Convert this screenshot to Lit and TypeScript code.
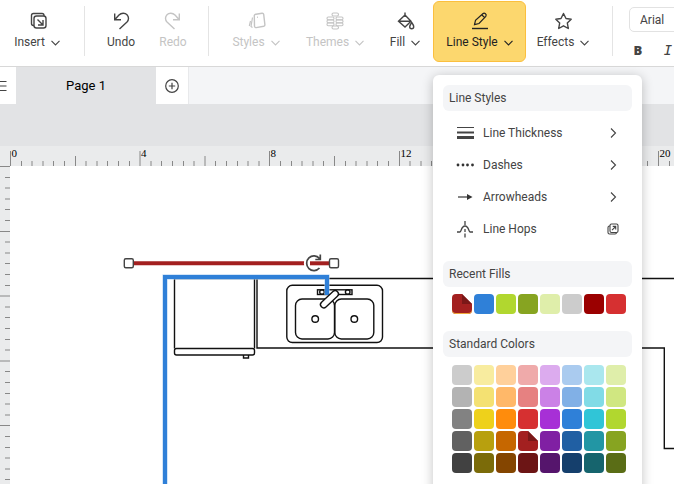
import { LitElement, html, svg, css } from "lit";
import { customElement, property } from "lit/decorators.js";
import { classMap } from "lit/directives/class-map.js";

const TOOL_ICONS: Record<string, unknown> = {
  insert: svg`<rect x="9" y="5" width="12" height="12" rx="2.500"/><path d="M9 14.500H8.500a2 2 0 0 1-2-2V4.500a2 2 0 0 1 2-2H17a2 2 0 0 1 2 2V5"/><path d="M12.500 8.500l5 5M18 9v5h-5"/>`,
  undo: svg`<path d="M5.700 2.500v6.200h6.300M5.700 8.700l4.300-4.700c2.400-2.300 6-2.300 8-.3s2 5.300 0 7.300l-7.500 7"/>`,
  redo: svg`<path d="M18.300 2.500v6.200H12M18.300 8.700L14 4c-2.400-2.300-6-2.300-8-.3s-2 5.300 0 7.300l7.500 7"/>`,
  styles: svg`<path d="M12 3.300l6-1.100a1.500 1.500 0 0 1 1.700 1.200l1.200 10.300a1.500 1.500 0 0 1-1.200 1.600l-7.500 1.300a1.500 1.500 0 0 1-1.700-1.200L10.300 5a1.500 1.500 0 0 1 1.700-1.700zM13 6.300h.8"/><path d="M8.500 6.500L7 15.500l1.500 1M6.500 10L5.300 15" stroke-width="1.200"/>`,
  themes: svg`<g stroke-width="1.100"><rect x="9" y="2" width="6.500" height="3" rx="1.500"/><rect x="4" y="6" width="7" height="2.800" rx="1.200"/><rect x="13" y="6" width="7" height="2.800" rx="1.200"/><rect x="4" y="9" width="7" height="2.800" rx="1.200"/><rect x="13" y="9" width="7" height="2.800" rx="1.200"/><rect x="4" y="12" width="7" height="2.800" rx="1.200"/><rect x="13" y="12" width="7" height="2.800" rx="1.200"/><rect x="9" y="15" width="6.500" height="3" rx="1.500"/></g>`,
  fill: svg`<path d="M12 4l6 6.200L12 16 5.500 10.200zM12 1.500V6M5.500 10.200H18"/><path d="M18.700 11.500c1.500 2 2 3 2 4.200a2 2 0 0 1-4 0c0-1.200.7-2.300 2-4.200z"/>`,
  line: svg`<path d="M4 17.500h16"/><path d="M6.500 13.700l1-4.300 7.300-6.600a2 2 0 0 1 3 2.600L11 12.500zM14 4l2.500 2.500" stroke-width="1.200"/>`,
  effects: svg`<path d="M12.500 2.500l2.500 5 5.200.7-3.900 3.700 1 5.600-4.800-2.700-4.800 2.700 1-5.600-3.900-3.700 5.200-.7z" stroke-linejoin="round"/>`,
};

const MENU_ICONS: Record<string, unknown> = {
  thickness: svg`<path d="M2 4.500h17" stroke-width="1"/><path d="M2 9.500h17" stroke-width="2"/><path d="M2 14.500h17" stroke-width="3"/>`,
  dashes: svg`<g class="solid"><circle cx="3" cy="10" r="1.400"/><circle cx="8" cy="10" r="1.400"/><circle cx="12.500" cy="10" r="1.400"/><circle cx="17.500" cy="10" r="1.400"/></g>`,
  arrowheads: svg`<path d="M3 10h11"/><path class="solid" d="M12 7l5.500 3-5.500 3z"/>`,
  hops: svg`<path d="M2 13h3c1.500 0 1-6 5-6s3.500 6 5 6h3M10 2v4M10 10v3M10 14.500v4"/>`,
};

@customElement("tool-button")
class ToolButton extends LitElement {
  @property() icon = "";
  @property() label = "";
  @property({ type: Boolean }) menu = false;
  @property({ type: Boolean }) off = false;
  @property({ type: Boolean }) active = false;

  static styles = css`
    :host { display: block; }
    button {
      width: 100%; height: 61px; margin: 0; padding: 9px 0 0;
      border: 1px solid transparent; border-radius: 6px; background: none;
      display: flex; flex-direction: column; align-items: center; gap: 3px;
      font: 12px/16px Roboto, sans-serif; color: #444; white-space: nowrap;
    }
    button.active { background: #fcd76e; border-color: #fbbf3e; color: #222; }
    button:disabled { color: #c4c4c4; }
    svg { fill: none; stroke: currentColor; stroke-width: 1.4; }
    .label { display: flex; align-items: center; gap: 6px; }
    .caret { stroke-width: 1.1; margin-top: 1px; }
  `;

  render() {
    return html`<button class=${classMap({ active: this.active })} ?disabled=${this.off}>
      <svg width="24" height="20" viewBox="0 0 24 20">${TOOL_ICONS[this.icon]}</svg>
      <span class="label">${this.label}
        ${this.menu ? html`<svg class="caret" width="9" height="6" viewBox="0 0 9 6"><path d="M.5.8l4 4.200L8.500.8"/></svg>` : ""}
      </span>
    </button>`;
  }
}

@customElement("color-swatches")
class ColorSwatches extends LitElement {
  @property({ attribute: false }) colors: string[] = [];
  @property({ type: Boolean }) outlined = false;
  @property() selected = "";

  static styles = css`
    :host { display: grid; grid-template-columns: repeat(8, 20px); gap: 2px; }
    button { height: 20px; padding: 0; border: 0; border-radius: 4px; overflow: hidden; }
    .selected { clip-path: polygon(0 0, 50% 0, 100% 50%, 100% 100%, 0 100%); position: relative; }
    .selected::after {
      content: ""; position: absolute; top: 0; right: 0; width: 10px; height: 10px;
      background: #7a1818;
    }
    .outlined { box-shadow: inset 0 -1px #f0a83a; }
  `;

  render() {
    return this.colors.map((c) => {
      const selected = c === this.selected;
      return html`<button aria-label=${c} style="background:${c}"
        class=${classMap({ selected, outlined: selected && this.outlined })}></button>`;
    });
  }
}

const RECENT = ["#a32020", "#2f80d8", "#b1d72f", "#87a421", "#dfeeaa", "#cccccc", "#9b0000", "#d63031"];
const STANDARD = [
  "#cccccc", "#f8ec9f", "#ffd09b", "#efaaaa", "#dcabee", "#aacbef", "#aae7ee", "#dfeeaa",
  "#b3b3b3", "#f4e172", "#ffb869", "#e68181", "#cb81e6", "#81b0e6", "#81dbe6", "#d0e781",
  "#828282", "#eed11b", "#ff8c0c", "#d63031", "#a730d6", "#2f80d8", "#30c5d7", "#b1d72f",
  "#616161", "#b8a00e", "#c66700", "#a32020", "#8020a3", "#205fa3", "#2296a4", "#87a421",
  "#414141", "#7b6b09", "#844500", "#6c1515", "#55156c", "#153f6c", "#16646d", "#5a6d16",
];

@customElement("line-style-panel")
class LineStylePanel extends LitElement {
  static styles = css`
    :host {
      display: block; box-sizing: border-box; width: 209px; padding: 10px 10px 24px;
      background: #fff; border-radius: 6px; box-shadow: 0 2px 12px rgba(0, 0, 0, 0.24);
      font: 12px/16px Roboto, sans-serif; color: #444;
    }
    h2 {
      margin: 0; padding: 5px 6px; border-radius: 6px; background: #f4f5f7;
      font-size: 12px; font-weight: 400;
    }
    .rows { padding: 6px 12px 16px; }
    .row {
      width: 100%; height: 32px; padding: 0; border: 0; background: none;
      display: flex; align-items: center; gap: 8px; font: inherit; color: inherit; text-align: left;
    }
    .name { flex: 1; }
    svg { fill: none; stroke: #444; stroke-width: 1.3; }
    .solid { fill: #333; stroke: none; }
    .end { stroke-width: 1.1; }
    .recent { padding: 7px 9px 17px; }
    .standard { padding: 8px 9px; }
  `;

  row(icon: string, name: string, opens = false) {
    return html`<button class="row">
      <svg width="20" height="20" viewBox="0 0 20 20">${MENU_ICONS[icon]}</svg>
      <span class="name">${name}</span>
      <svg class="end" width="14" height="14" viewBox="0 0 14 14">${opens
        ? svg`<rect x="4" y="2" width="8" height="8.500" rx="1.500"/><path d="M4 4H3.500A1.500 1.500 0 0 0 2 5.500v5A1.500 1.500 0 0 0 3.500 12H9a1.500 1.500 0 0 0 1.500-1.500M6 8.200l3.700-3.700M6.700 4.400h3v3"/>`
        : svg`<path d="M5 2.500L9.500 7 5 11.500"/>`}</svg>
    </button>`;
  }

  render() {
    return html`
      <h2>Line Styles</h2>
      <div class="rows">
        ${this.row("thickness", "Line Thickness")}
        ${this.row("dashes", "Dashes")}
        ${this.row("arrowheads", "Arrowheads")}
        ${this.row("hops", "Line Hops", true)}
      </div>
      <h2>Recent Fills</h2>
      <div class="recent"><color-swatches outlined .colors=${RECENT} selected="#a32020"></color-swatches></div>
      <h2>Standard Colors</h2>
      <div class="standard"><color-swatches .colors=${STANDARD} selected="#a32020"></color-swatches></div>
    `;
  }
}

const TICK = 10.8;
const LABEL_ROOM = 24;
const ticksWithin = (length: number) =>
  Array.from({ length: Math.ceil(length / TICK) }, (_, i) => i);

@customElement("app-root")
class AppRoot extends LitElement {
  static styles = css`
    :host {
      display: flex; flex-direction: column; height: 100vh; overflow: hidden;
      background: #e2e3e5; font: 12px/16px Roboto, sans-serif; color: #444;
    }
    .toolbar {
      display: flex; flex: none; padding-bottom: 4px;
      background: #fff; border-bottom: 1px solid #d8d8d8;
    }
    .group { display: flex; flex: none; padding-top: 1px; position: relative; }
    .group::after {
      content: ""; position: absolute; right: 0; top: 6px; bottom: 6px; width: 1px; background: #e4e4e4;
    }
    .insert { padding-right: 11px; }
    .history { padding-left: 10px; padding-right: 10px; }
    .format { padding-left: 10px; padding-right: 13px; }
    .w52 { width: 52px; }
    .w56 { width: 56px; }
    .w74 { width: 74px; }
    .w84 { width: 84px; }
    .w93 { width: 93px; }
    .anchor { position: relative; }
    line-style-panel { position: absolute; z-index: 2; top: 74px; left: 0; }
    .font { flex: none; display: flex; flex-direction: column; gap: 8px; padding: 7px 16px 0; }
    select {
      appearance: none; box-sizing: border-box; width: 130px; height: 25px; padding: 0 10px;
      border: 1px solid #e2e2e2; border-radius: 5px; background: #fff;
      font: 12px/16px Roboto, sans-serif; color: #444;
    }
    .marks { display: flex; gap: 12px; }
    .marks button {
      width: 18px; height: 20px; padding: 0; border: 0; background: none;
      font: 900 13px/20px "Noto Sans", sans-serif; color: #444;
    }
    .marks .italic { font: italic 14px/20px "DejaVu Sans Mono", monospace; }
    .tabs { display: flex; flex: none; height: 37px; background: #f4f5f7; }
    .tabs button { padding: 0; border: 0; background: #fff; display: flex; align-items: center; justify-content: center; }
    .tabs svg { fill: none; stroke: #444; stroke-width: 1.2; }
    .tabs .pages { width: 16px; justify-content: flex-start; }
    .tabs .page { width: 140px; background: #e2e3e5; font: 13px/18px Roboto, sans-serif; color: #000; }
    .tabs .add { width: 33px; border-right: 1px solid #e8e9eb; }
    .workspace {
      flex: 1; min-height: 0; margin-top: 42px; display: grid;
      grid-template-columns: 10px minmax(0, 1fr); grid-template-rows: 20px minmax(0, 1fr);
      background: #eaebec;
    }
    .workspace svg { display: block; width: 100%; height: 100%; }
    .ruler { stroke: #888; stroke-width: 1; }
    .ruler text { stroke: none; fill: #000; font: 11px "Liberation Serif", serif; }
    .canvas { background: #fff; fill: none; stroke: #111; stroke-width: 1.4; }
    .canvas .wire { stroke: #2f80d8; stroke-width: 4; }
    .canvas .wire-edge { stroke: #a9cdf2; stroke-width: 5; }
    .canvas .beam { stroke: #a32020; stroke-width: 4; }
    .canvas .handle { fill: #fff; stroke: #444; }
    .canvas .paper { fill: #fff; }
    .canvas .halo { stroke: #fff; stroke-width: 5; }
    .canvas .rotate { stroke: #444; stroke-width: 1.7; }
  `;

  private onResize = () => this.requestUpdate();

  connectedCallback() {
    super.connectedCallback();
    window.addEventListener("resize", this.onResize);
  }

  disconnectedCallback() {
    window.removeEventListener("resize", this.onResize);
    super.disconnectedCallback();
  }

  topRuler() {
    const width = window.innerWidth - 10;
    return ticksWithin(width).map((i) => {
      const x = Math.round(i * TICK * 2) / 2 + 0.5;
      const len = i % 12 === 0 ? 15 : i % 6 === 0 ? 10 : 5;
      const labelled = i % 12 === 0 && x + (i < 30 ? 6 : 12) < width;
      return svg`<path d="M${x} ${20 - len}v${len}"/>
        ${labelled ? svg`<text x=${x + 1} y="11">${i / 3}</text>` : ""}`;
    });
  }

  leftRuler() {
    return ticksWithin(window.innerHeight - LABEL_ROOM).map((i) => {
      const y = Math.round(i * TICK * 2) / 2 + 0.5;
      return svg`<path d="M${i % 6 === 0 ? 0 : 5} ${y}H10"/>`;
    });
  }

  drawing() {
    return svg`<g transform="translate(-10 -166)">
      <path d="M174 278.500H2000M257 278.500V348H664.300V448.500H2000"/>
      <path d="M174.500 278.500v70M254.500 278.500v70"/>
      <rect class="paper" x="174.500" y="348.500" width="80" height="6.500" rx="2"/>
      <path d="M243.500 355v3h5v-3"/>
      <rect x="286.800" y="285.300" width="95.700" height="57.200" rx="5.500"/>
      <rect x="295.500" y="299" width="39" height="40" rx="6.500"/>
      <rect x="334.800" y="299" width="39" height="40" rx="6.500"/>
      <circle cx="315.200" cy="319" r="3.300"/><circle cx="354.300" cy="319" r="3.300"/>
      <rect x="317.500" y="289.800" width="34.500" height="4.700"/>
      <circle cx="322" cy="292" r="2.300"/><circle cx="347.700" cy="292" r="2.300"/>
      <path class="wire-edge" d="M165 2000V277H327V295"/>
      <path class="wire" d="M165 2000V277H327V295"/>
      <rect class="paper" x="318.500" y="296" width="22" height="6.500" rx="3.200" transform="rotate(-43 329.500 299.300)"/>
      <path class="beam" d="M133 263.300H304.500"/>
      <path class="halo" d="M318.500 258a7.200 7.200 0 1 0 .5 10"/>
      <path class="beam" d="M310 263.300H330"/>
      <path class="rotate" d="M319.500 258.500a7.300 7.300 0 1 0 0 9.500M320.300 254.500v5h-5"/>
      <rect class="handle" x="124.300" y="258.800" width="9" height="9" rx="1.500"/>
      <rect class="handle" x="329.500" y="258.800" width="9" height="9" rx="1.500"/>
    </g>`;
  }

  render() {
    return html`
      <header class="toolbar">
        <div class="group insert"><tool-button class="w74" icon="insert" label="Insert" menu></tool-button></div>
        <div class="group history">
          <tool-button class="w52" icon="undo" label="Undo"></tool-button>
          <tool-button class="w52" icon="redo" label="Redo" off></tool-button>
        </div>
        <div class="group format">
          <tool-button class="w74" icon="styles" label="Styles" menu off></tool-button>
          <tool-button class="w84" icon="themes" label="Themes" menu off></tool-button>
          <tool-button class="w56" icon="fill" label="Fill" menu></tool-button>
          <div class="anchor">
            <tool-button class="w93" icon="line" label="Line Style" menu active></tool-button>
            <line-style-panel></line-style-panel>
          </div>
          <tool-button class="w74" icon="effects" label="Effects" menu></tool-button>
        </div>
        <div class="font">
          <select aria-label="Font"><option>Arial</option></select>
          <div class="marks">
            <button aria-label="Bold">B</button>
            <button class="italic" aria-label="Italic">I</button>
          </div>
        </div>
      </header>
      <nav class="tabs">
        <button class="pages" aria-label="Page list">
          <svg width="7" height="12" viewBox="0 0 7 12"><path d="M0 1.500h6.500M0 6h6.500M0 10.500h6.500"/></svg>
        </button>
        <button class="page">Page 1</button>
        <button class="add" aria-label="Add page">
          <svg width="16" height="16" viewBox="0 0 16 16"><circle cx="8" cy="8" r="6.300"/><path d="M8 4.800v6.400M4.800 8h6.400"/></svg>
        </button>
      </nav>
      <main class="workspace">
        <span></span>
        <svg class="ruler">${this.topRuler()}</svg>
        <svg class="ruler">${this.leftRuler()}</svg>
        <svg class="canvas">${this.drawing()}</svg>
      </main>
    `;
  }
}
